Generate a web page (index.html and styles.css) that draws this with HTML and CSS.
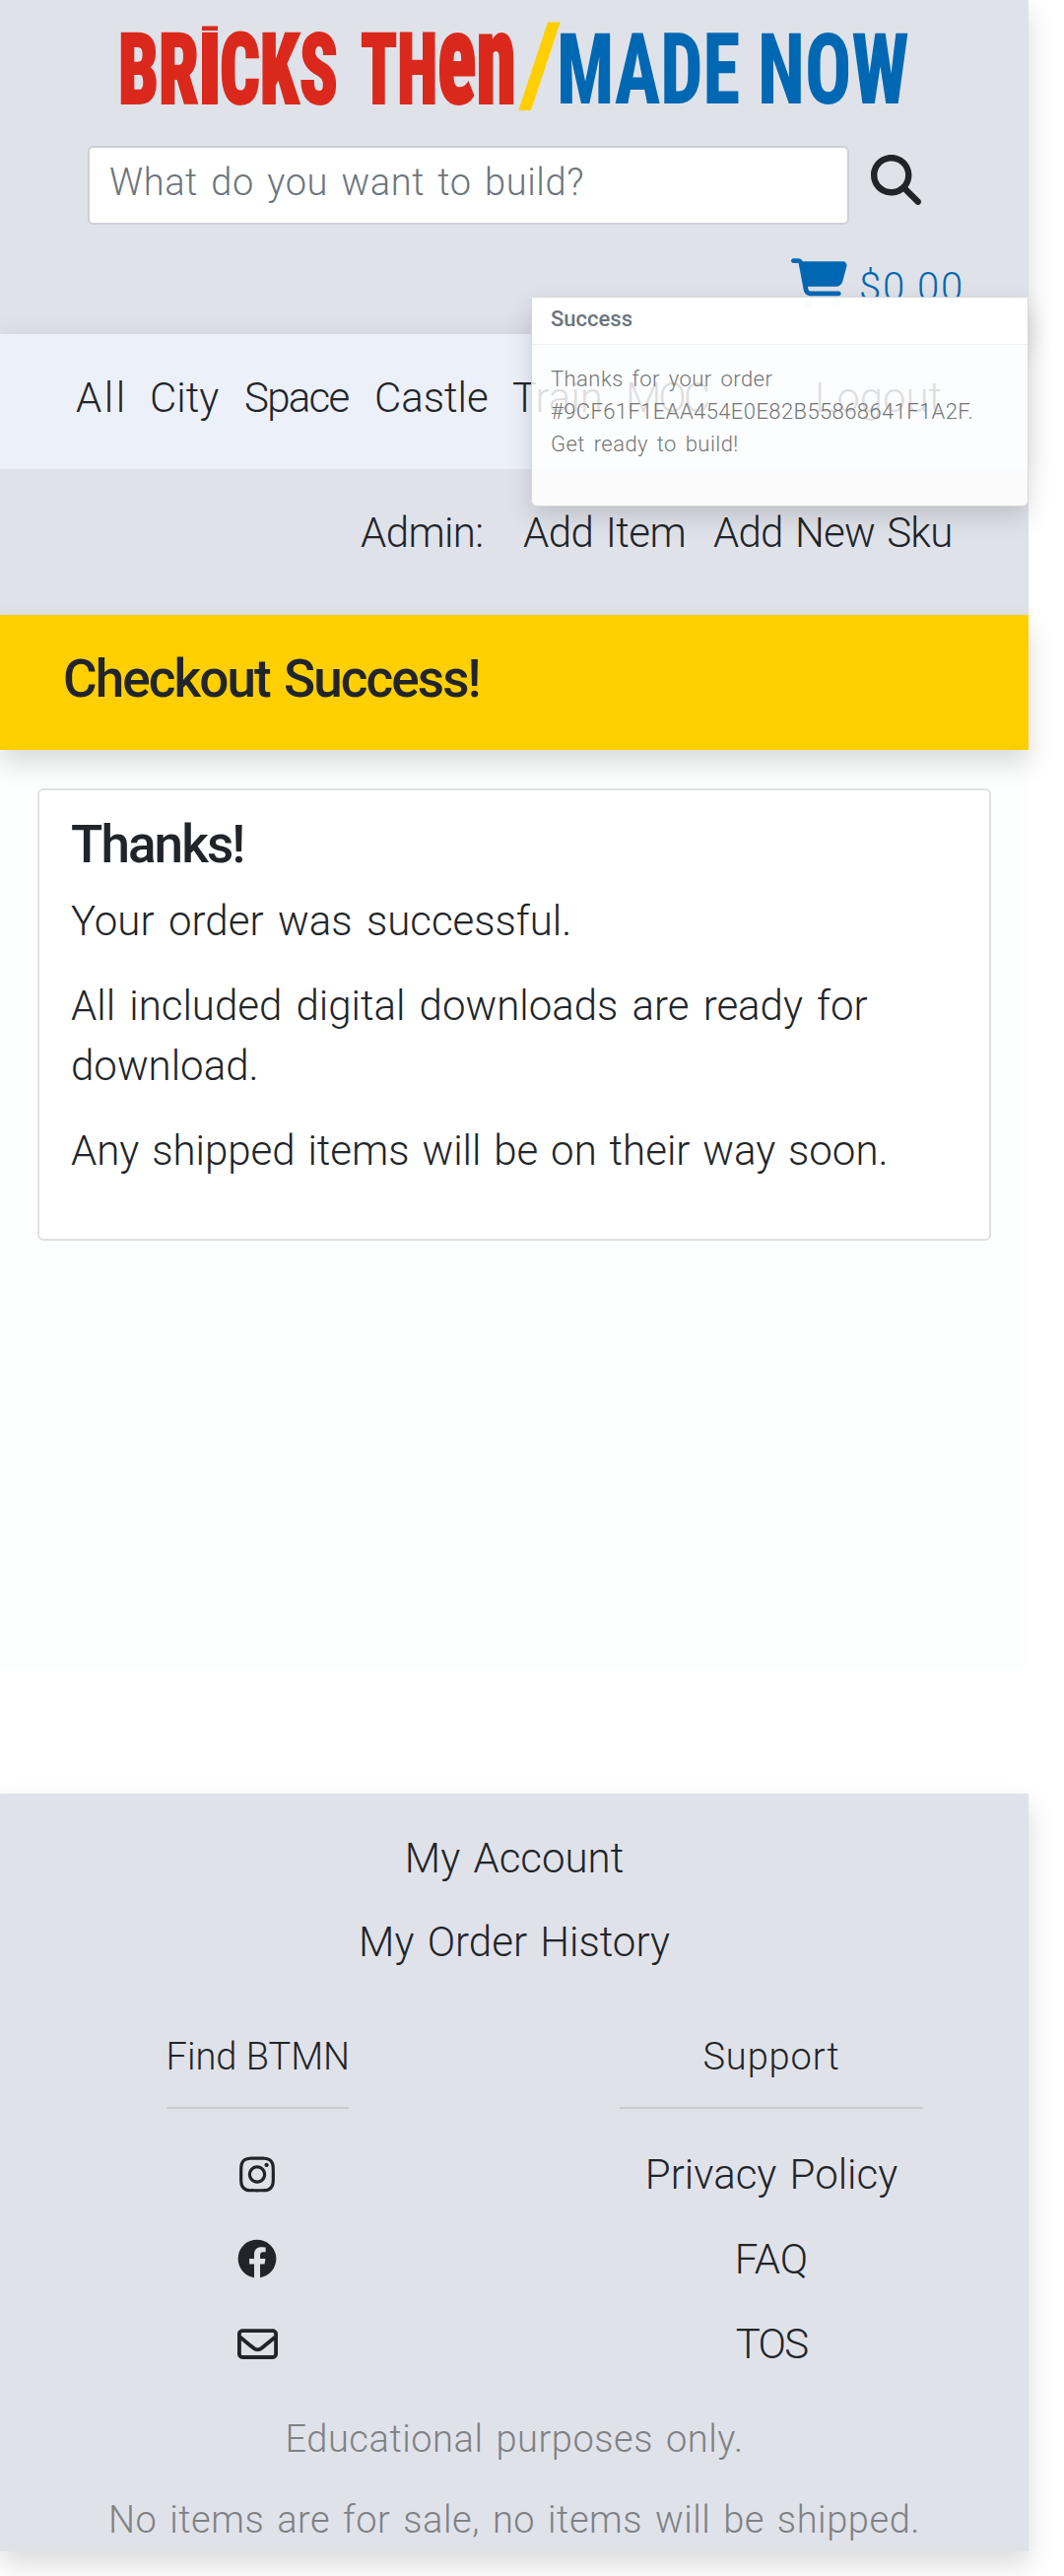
FILE: index.html
```html
<!DOCTYPE html>
<html lang="en">
<head>
<meta charset="utf-8">
<title>Bricks Then / Made Now</title>
<link rel="stylesheet" href="styles.css">
</head>
<body>
<div class="page">
  <header class="masthead">
    <svg class="logo" width="1044" height="130" viewBox="0 0 1044 130">
      <g class="logo-then">
        <text x="120" y="105" textLength="82" lengthAdjust="spacingAndGlyphs">BR</text>
        <text x="201" y="105" textLength="24" lengthAdjust="spacingAndGlyphs">I</text>
        <rect x="205" y="26.500" width="16" height="4.500"/>
        <text x="223" y="105" textLength="120" lengthAdjust="spacingAndGlyphs">CKS</text>
        <text x="366" y="105" textLength="78" lengthAdjust="spacingAndGlyphs">TH</text>
        <text class="uni" x="444" y="104.500" textLength="80" lengthAdjust="spacingAndGlyphs">en</text>
      </g>
      <polygon class="slash" points="556,22.500 568.700,22.500 539,112 526.300,112"/>
      <g class="logo-now">
        <text x="565" y="105" textLength="186" lengthAdjust="spacingAndGlyphs">MADE</text>
        <text x="769" y="105" textLength="154" lengthAdjust="spacingAndGlyphs">NOW</text>
      </g>
    </svg>
    <form class="search">
      <input type="text" placeholder="What do you want to build?">
      <svg width="51" height="51" viewBox="0 0 512 512"><path d="M416 208c0 45.900-14.900 88.300-40 122.700L502.600 457.400c12.500 12.500 12.500 32.800 0 45.300s-32.800 12.500-45.300 0L330.700 376c-34.400 25.200-76.800 40-122.700 40C93.100 416 0 322.900 0 208S93.100 0 208 0S416 93.100 416 208zM208 352a144 144 0 1 0 0-288 144 144 0 1 0 0 288z"/></svg>
    </form>
    <div class="cart">
      <svg width="57" height="51" viewBox="0 0 576 512"><path d="M0 24C0 10.700 10.700 0 24 0H69.500c22 0 41.500 12.800 50.600 32h411c26.300 0 45.500 25 38.600 50.400l-41 152.300c-8.500 31.400-37 53.300-69.500 53.300H170.700l5.400 28.500c2.200 11.300 12.100 19.500 23.600 19.500H488c13.300 0 24 10.700 24 24s-10.700 24-24 24H199.700c-34.600 0-64.300-24.600-70.700-58.500L77.400 54.500c-.7-3.800-4-6.500-7.900-6.500H24C10.700 48 0 37.300 0 24zM128 464a48 48 0 1 1 96 0 48 48 0 1 1 -96 0zm336-48a48 48 0 1 1 0 96 48 48 0 1 1 0-96z"/></svg>
      <span>$0.00</span>
    </div>
  </header>

  <nav class="themes">
    <a class="all">All</a><a>City</a><a class="tight">Space</a><a>Castle</a><a>Train</a><a class="moc">MOC</a><a>Logout</a>
  </nav>
  <div class="admin"><span>Admin:</span><a>Add Item</a><a>Add New Sku</a></div>
  <div class="banner"><h1>Checkout Success!</h1></div>

  <main>
    <section class="card">
      <h2>Thanks!</h2>
      <p class="lead">Your order was successful.</p>
      <p class="downloads">All included digital downloads are ready for download.</p>
      <p>Any shipped items will be on their way soon.</p>
    </section>
  </main>

  <footer>
    <a>My Account</a>
    <a>My Order History</a>
    <div class="columns">
      <div class="col">
        <h3 class="find">Find BTMN</h3>
        <a><svg width="36" height="41" viewBox="0 0 448 512"><path d="M224.100 141c-63.600 0-114.900 51.300-114.900 114.900s51.300 114.900 114.900 114.900S339 319.500 339 255.900 287.700 141 224.100 141zm0 189.600c-41.100 0-74.700-33.500-74.700-74.700s33.500-74.700 74.700-74.700 74.700 33.500 74.700 74.700-33.600 74.700-74.700 74.700zm146.400-194.300c0 14.900-12 26.800-26.800 26.800-14.900 0-26.800-12-26.800-26.800s12-26.800 26.800-26.800 26.800 12 26.800 26.800zm76.100 27.200c-1.700-35.900-9.900-67.700-36.200-93.900-26.200-26.200-58-34.400-93.900-36.200-37-2.100-147.900-2.100-184.900 0-35.800 1.700-67.600 9.900-93.900 36.100s-34.400 58-36.200 93.900c-2.100 37-2.100 147.900 0 184.900 1.700 35.900 9.900 67.700 36.200 93.900s58 34.400 93.900 36.200c37 2.100 147.900 2.100 184.900 0 35.900-1.700 67.700-9.900 93.900-36.200 26.200-26.200 34.400-58 36.200-93.900 2.100-37 2.100-147.800 0-184.800zM398.800 388c-7.800 19.600-22.900 34.700-42.600 42.600-29.500 11.700-99.500 9-132.100 9s-102.700 2.600-132.100-9c-19.600-7.800-34.700-22.900-42.600-42.600-11.700-29.500-9-99.500-9-132.100s-2.600-102.700 9-132.100c7.800-19.600 22.900-34.700 42.600-42.600 29.500-11.700 99.500-9 132.100-9s102.700-2.600 132.100 9c19.600 7.800 34.700 22.900 42.600 42.600 11.700 29.500 9 99.500 9 132.100s2.700 102.700-9 132.100z"/></svg></a>
        <a><svg width="40" height="40" viewBox="0 0 512 512"><path d="M504 256C504 119 393 8 256 8S8 119 8 256c0 123.780 90.690 226.380 209.250 245V327.690h-63V256h63v-54.640c0-62.150 37-96.480 93.670-96.480 27.140 0 55.520 4.840 55.520 4.840v61h-31.280c-30.800 0-40.410 19.120-40.410 38.730V256h68.780l-11 71.690h-57.780V501C413.310 482.380 504 379.780 504 256z"/></svg></a>
        <a><svg width="41" height="41" viewBox="0 0 512 512"><path d="M64 112c-8.800 0-16 7.200-16 16v22.100L220.500 291.700c20.700 17 50.400 17 71.100 0L464 150.100V128c0-8.800-7.200-16-16-16H64zM48 212.200V384c0 8.800 7.200 16 16 16H448c8.800 0 16-7.200 16-16V212.200L322 328.800c-38.400 31.500-93.700 31.500-132 0L48 212.200zM0 128C0 92.700 28.700 64 64 64H448c35.300 0 64 28.700 64 64V384c0 35.300-28.700 64-64 64H64c-35.300 0-64-28.700-64-64V128z"/></svg></a>
      </div>
      <div class="col">
        <h3 class="support">Support</h3>
        <a>Privacy Policy</a>
        <a>FAQ</a>
        <a class="tight">TOS</a>
      </div>
    </div>
    <p>Educational purposes only.</p>
    <p>No items are for sale, no items will be shipped.</p>
  </footer>

  <aside class="toast">
    <strong>Success</strong>
    <div class="toast-body">Thanks for your order<br><span class="order">#9CF61F1EAA454E0E82B55868641F1A2F.</span><br>Get ready to build!</div>
  </aside>
</div>
</body>
</html>
```
FILE: styles.css
```css
* { box-sizing: border-box; }

html { background: #fff; }

body {
  margin: 0;
  color: #212529;
  font: 300 42px/61px Roboto, "Open Sans", sans-serif;
  word-spacing: 3px;
}

h1, h2, h3, p { margin: 0; }

.page {
  position: relative;
  width: 1044px;
  height: 2614px;
}

.masthead, .banner, footer { box-shadow: 0 13px 26px rgba(0, 0, 0, .15); }

/* Masthead */
.masthead {
  height: 339px;
  background: #e0e2ea;
}

.logo {
  display: block;
  font-family: Roboto, sans-serif;
  font-size: 100px;
  font-stretch: 75%;
  word-spacing: 0;
}

.logo-then { fill: #da291c; font-weight: 900; }
.logo-then text { stroke: #da291c; stroke-width: 2px; }
.logo-then .uni { font-size: 131px; }
.slash { fill: #ffcf00; }
.logo-now { fill: #0068b3; font-weight: 800; }

.search {
  display: flex;
  align-items: flex-start;
  gap: 22px;
  margin: 18px 0 0 89px;
}

.search input {
  width: 773px;
  height: 80px;
  padding: 0 20px 6px;
  border: 2px solid #ced0d8;
  border-radius: 6px;
  background: #fff;
  color: inherit;
  font: 300 38px Roboto, "Open Sans", sans-serif;
  letter-spacing: .6px;
  word-spacing: 3.5px;
}

.search input::placeholder { color: #6c757d; opacity: 1; }
.search svg { margin-top: 9px; fill: #212529; }

.cart {
  display: flex;
  align-items: flex-start;
  gap: 12px;
  margin: 34px 0 0 803px;
  color: #0068b3;
  font-size: 40px;
  line-height: 60px;
  letter-spacing: 1.700px;
}

.cart svg { fill: #0068b3; }

/* Navigation */
.themes {
  display: grid;
  grid-template-columns: 75px 96px 132px 140px 115px 192px auto;
  height: 137px;
  padding-left: 77px;
  background: #ecf0f9;
  line-height: 129px;
  box-shadow: 0 0 26px rgba(0, 0, 0, .08);
}

.themes .all { letter-spacing: 2.500px; }
.tight { letter-spacing: -1.700px; }
.moc { letter-spacing: -3px; }

.admin {
  display: flex;
  height: 148px;
  padding-left: 366px;
  position: relative;
  background: #e0e2ea;
  line-height: 129px;
  letter-spacing: -.6px;
}

.admin span { width: 165px; }
.admin a + a { margin-left: 28px; letter-spacing: -.8px; }

.banner {
  position: relative;
  height: 137px;
  padding-left: 64px;
  background: #ffcf00;
}

h1, h2 {
  font-size: 53px;
  font-weight: 500;
  letter-spacing: -1.900px;
}

h1 { line-height: 130px; }

/* Order summary */
main {
  height: 933px;
  margin-bottom: 126px;
  padding: 39px 38px 0;
  background: #fdfefe;
}

.card {
  height: 459px;
  padding: 23px 34px 0 32px;
  border: 2px solid #dfe0e1;
  border-radius: 6px;
  background: #fff;
}

.card h2 { margin-bottom: 15px; line-height: 64px; }
.card p { margin-bottom: 25px; word-spacing: 2.600px; }
.card .lead { word-spacing: 4.200px; }
.card .downloads { word-spacing: 3.900px; }

/* Footer */
footer {
  height: 769px;
  padding-top: 23px;
  background: #e0e2ea;
  text-align: center;
}

footer > a { display: block; line-height: 85px; }

.columns {
  display: grid;
  grid-template-columns: 1fr 1fr;
  margin-top: 46px;
}

.col {
  display: flex;
  flex-direction: column;
  align-items: center;
}

.col h3 {
  margin-bottom: 23px;
  padding-bottom: 22px;
  border-bottom: 2px solid #c9cbcf;
  font-size: 38px;
  font-weight: 300;
  line-height: 57px;
}

.find { width: 185px; white-space: nowrap; word-spacing: 0; }
.support { width: 308px; letter-spacing: .9px; }

.col a {
  display: flex;
  align-items: center;
  height: 86px;
}

.col svg { fill: #212529; }

footer p {
  color: #7f8184;
  font-size: 38px;
  line-height: 82px;
  letter-spacing: .55px;
}

.columns + p { margin-top: 13px; }

/* Notification laid over the page */
.toast {
  position: absolute;
  top: 301px;
  right: 0;
  width: 505px;
  height: 213px;
  border: 1px solid rgba(0, 0, 0, .14);
  border-radius: 6px;
  background: rgba(255, 255, 255, .85);
  box-shadow: 0 10px 26px rgba(0, 0, 0, .15);
  font-size: 22px;
  line-height: 33px;
}

.toast strong {
  display: block;
  height: 48px;
  padding-left: 19px;
  border-bottom: 1px solid rgba(0, 0, 0, .05);
  background: rgba(255, 255, 255, .85);
  color: #6c757d;
  font-weight: 500;
  line-height: 44px;
}

.toast-body {
  padding: 18px 0 0 19px;
  color: #757575;
  letter-spacing: .45px;
}

.order { letter-spacing: .4px; }
```
